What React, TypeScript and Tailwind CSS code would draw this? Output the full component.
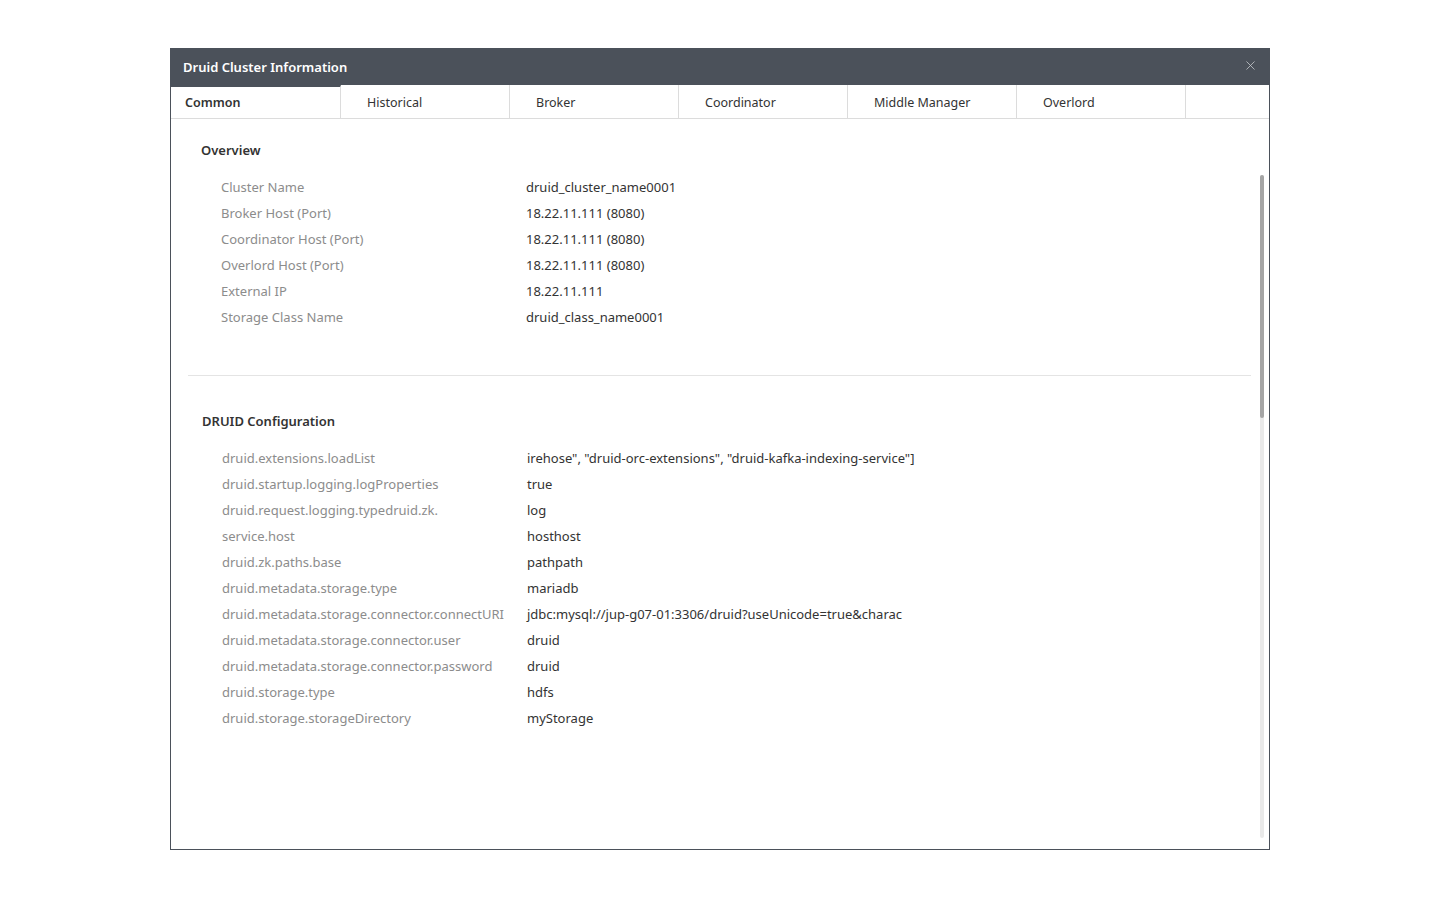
import { X } from "lucide-react";

const tabs = ["Common", "Historical", "Broker", "Coordinator", "Middle Manager", "Overlord"];

const overview = [
  ["Cluster Name", "druid_cluster_name0001"],
  ["Broker Host (Port)", "18.22.11.111 (8080)"],
  ["Coordinator Host (Port)", "18.22.11.111 (8080)"],
  ["Overlord Host (Port)", "18.22.11.111 (8080)"],
  ["External IP", "18.22.11.111"],
  ["Storage Class Name", "druid_class_name0001"],
];

const config = [
  ["druid.extensions.loadList", 'irehose", "druid-orc-extensions", "druid-kafka-indexing-service"]'],
  ["druid.startup.logging.logProperties", "true"],
  ["druid.request.logging.typedruid.zk.", "log"],
  ["service.host", "hosthost"],
  ["druid.zk.paths.base", "pathpath"],
  ["druid.metadata.storage.type", "mariadb"],
  ["druid.metadata.storage.connector.connectURI", "jdbc:mysql://jup-g07-01:3306/druid?useUnicode=true&charac"],
  ["druid.metadata.storage.connector.user", "druid"],
  ["druid.metadata.storage.connector.password", "druid"],
  ["druid.storage.type", "hdfs"],
  ["druid.storage.storageDirectory", "myStorage"],
];

function InfoRows({ rows }: { rows: string[][] }) {
  return (
    <div className="flex flex-col pl-[33px]">
      {rows.map(([label, value]) => (
        <div key={label} className="flex h-[26px] items-center text-[13px]">
          <span className="w-[305px] shrink-0 whitespace-nowrap text-[#8c8c8c]">{label}</span>
          <span className="whitespace-nowrap text-[#333]">{value}</span>
        </div>
      ))}
    </div>
  );
}

export default function App() {
  return (
    <div
      className="min-h-[900px] bg-white pl-[170px] pt-[48px]"
      style={{ fontFamily: '"Noto Sans", "Noto Sans CJK KR", sans-serif' }}
    >
      <div className="flex h-[802px] w-[1100px] flex-col border border-[#4b515a] bg-white">
        {/* header */}
        <div className="flex h-[36px] shrink-0 items-center justify-between bg-[#4b515a] pl-[12px] pr-[11px]">
          <span className="mt-[2px] text-[13px] font-semibold text-white">Druid Cluster Information</span>
          <X size={15} strokeWidth={1.25} className="mb-[3px] text-[#c9ccd0]" />
        </div>

        {/* tabs */}
        <div className="flex h-[34px] shrink-0 border-b border-[#dcdcdc]">
          {tabs.map((t, i) =>
            i === 0 ? (
              <div
                key={t}
                className="flex w-[170px] items-center border-r border-t-2 border-r-[#dcdcdc] border-t-[#4b515a] pl-[14px] pt-[2px] text-[12.5px] font-semibold text-[#333]"
              >
                {t}
              </div>
            ) : (
              <div
                key={t}
                className="flex w-[169px] items-center border-r border-[#dcdcdc] pl-[26px] pt-[3px] text-[12.5px] text-[#333]"
              >
                {t}
              </div>
            )
          )}
        </div>

        {/* body */}
        <div className="flex min-h-0 flex-1">
          <div className="flex-1 pl-[17px] pr-[9px] pt-[21px]">
            <div className="pl-[13px] text-[13px] font-semibold leading-[20px] text-[#333]">Overview</div>
            <div className="mt-[15px]">
              <InfoRows rows={overview} />
            </div>
            <div className="mt-[44px] border-t border-[#e4e4e4]" />
            <div className="mt-[35px] pl-[14px] text-[13px] font-semibold leading-[20px] text-[#333]">
              DRUID Configuration
            </div>
            <div className="mt-[15px] pl-[1px]">
              <InfoRows rows={config} />
            </div>
          </div>
          <div className="flex w-[9px] shrink-0 flex-col pb-[11px] pt-[56px]">
            <div className="flex w-[4px] flex-1 flex-col rounded-full bg-[#e9e9e9]">
              <div className="h-[243px] rounded-full bg-[#a5a5a5]" />
            </div>
          </div>
        </div>
      </div>
    </div>
  );
}
